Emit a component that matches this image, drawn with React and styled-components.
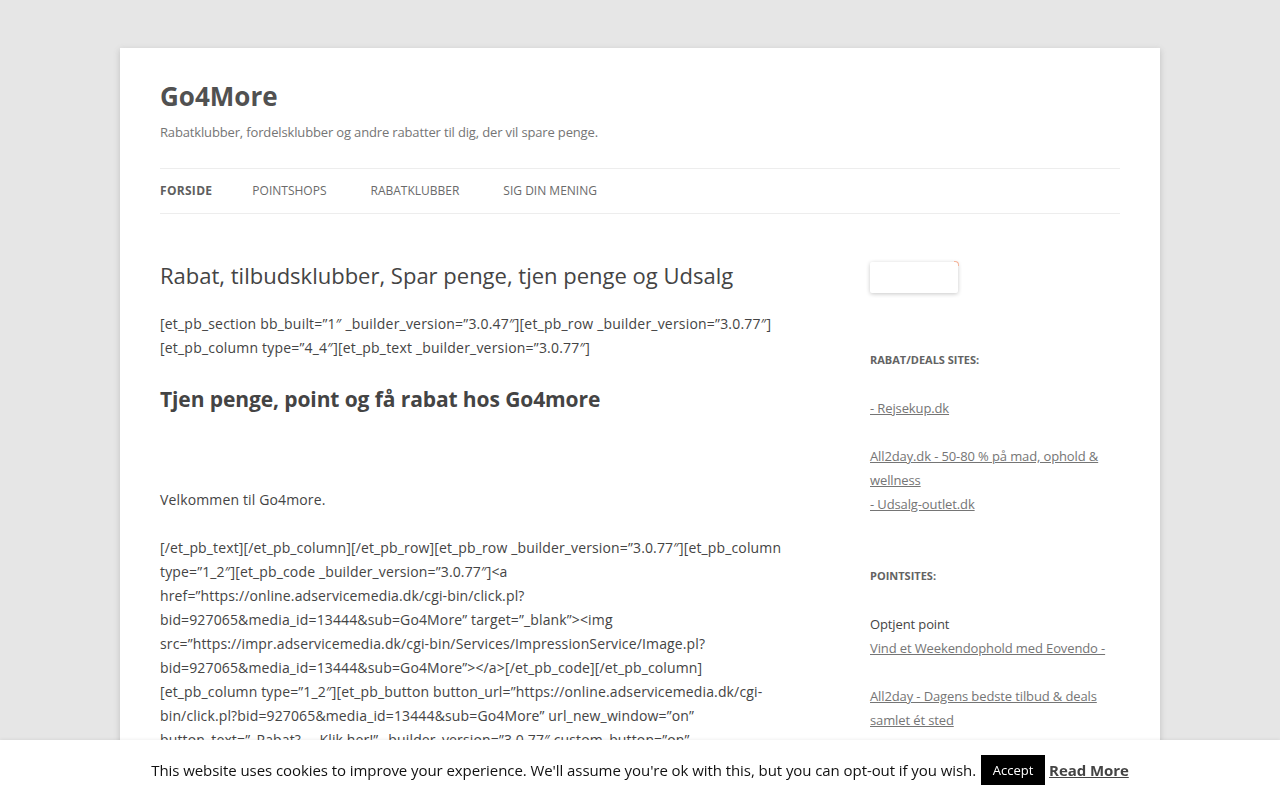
import React from "react";
import styled, { createGlobalStyle } from "styled-components";

const Global = createGlobalStyle`
  html, body { margin: 0; padding: 0; }
  body {
    background: #e6e6e6;
    font-family: "Open Sans", "Liberation Sans", sans-serif;
    color: #444;
    font-size: 14px;
    line-height: 24px;
  }
`;

const Page = styled.div`
  max-width: 960px;
  margin: 48px auto;
  padding: 0 40px 120px;
  background: #fff;
  box-shadow: 0 2px 6px rgba(100, 100, 100, 0.3);
  overflow: hidden;
`;

const Header = styled.header`
  padding: 24px 0 0;
`;

const SiteTitle = styled.h1`
  margin: 0;
  font-size: 26px;
  line-height: 48px;
  font-weight: 700;
  color: #515151;
`;

const SiteDesc = styled.h2`
  margin: 0;
  font-size: 13px;
  line-height: 24px;
  font-weight: 400;
  letter-spacing: -0.15px;
  color: #757575;
`;

const Nav = styled.nav`
  margin-top: 24px;
  border-top: 1px solid #ededed;
  border-bottom: 1px solid #ededed;
  display: flex;
  gap: 44px;
`;

const NavItem = styled.a`
  font-size: 12px;
  line-height: 44px;
  text-transform: uppercase;
  text-decoration: none;
  color: ${(p) => (p.$active ? "#5e5e5e" : "#6a6a6a")};
  font-weight: ${(p) => (p.$active ? 700 : 400)};
  letter-spacing: ${(p) => (p.$active ? "0.3px" : "0")};
  margin-right: ${(p) => (p.$active ? "-4px" : "0")};
`;

const Main = styled.div`
  display: flex;
  justify-content: space-between;
  padding-top: 48px;
`;

const Content = styled.article`
  width: 625px;
`;

const EntryTitle = styled.h1`
  margin: 0 0 25px;
  padding-top: 1px;
  font-size: 22px;
  line-height: 24px;
  font-weight: 400;
  color: #444;
`;

const P = styled.p`
  margin: 0 0 24px;
  font-size: 14px;
  line-height: 24px;
  letter-spacing: ${(p) => p.$ls || "0.14px"};
  color: #444;
`;

const H1 = styled.h2`
  margin: 0 0 24px;
  font-size: 21px;
  line-height: 31.5px;
  font-weight: 700;
  letter-spacing: -0.1px;
  color: #444;
`;

const Sidebar = styled.aside`
  width: 250px;
`;

const Widget = styled.section`
  margin-bottom: ${(p) => p.$mb || 48}px;
`;

const BadgeBox = styled.div`
  position: relative;
  width: 88px;
  height: 31px;
  background: #fff;
  border-radius: 2px;
  box-shadow: 0 1px 4px rgba(0, 0, 0, 0.22);
  &::after {
    content: "";
    position: absolute;
    right: -1px;
    top: -1px;
    width: 4px;
    height: 4px;
    border-top-right-radius: 4px;
    border-top: 1px solid #f5b49a;
    border-right: 1px solid #f5b49a;
  }
`;

const WidgetTitle = styled.h3`
  margin: 0 0 24px;
  font-size: 11px;
  line-height: 24px;
  font-weight: 700;
  text-transform: uppercase;
  color: #636363;
`;

const WidgetText = styled.div`
  font-size: 13px;
  line-height: 24px;
  letter-spacing: -0.12px;
  color: #444;
`;

const WLink = styled.a`
  color: #757575;
  text-decoration: underline;
`;

const CookieBar = styled.div`
  position: fixed;
  left: 0;
  right: 0;
  bottom: 0;
  height: 60px;
  background: #fff;
  box-shadow: 0 -1px 3px rgba(0, 0, 0, 0.06);
  display: flex;
  align-items: center;
  justify-content: center;
  font-size: 15px;
  letter-spacing: -0.07px;
  color: #111;
`;

const AcceptBtn = styled.button`
  margin-left: 5px;
  background: #000;
  color: #fff;
  border: 0;
  font-family: "Open Sans", "Liberation Sans", sans-serif;
  font-size: 13px;
  height: 30px;
  width: 64px;
  padding: 0;
  cursor: pointer;
`;

const ReadMore = styled.a`
  margin-left: 4px;
  font-weight: 700;
  color: #444;
  text-decoration: underline;
`;

export default function App() {
  return (
    <>
      <Global />
      <Page>
        <Header>
          <SiteTitle>Go4More</SiteTitle>
          <SiteDesc>Rabatklubber, fordelsklubber og andre rabatter til dig, der vil spare penge.</SiteDesc>
          <Nav>
            <NavItem $active>Forside</NavItem>
            <NavItem>Pointshops</NavItem>
            <NavItem>Rabatklubber</NavItem>
            <NavItem>Sig din mening</NavItem>
          </Nav>
        </Header>
        <Main>
          <Content>
            <EntryTitle>Rabat, tilbudsklubber, Spar penge, tjen penge og Udsalg</EntryTitle>
            <P $ls="0.2px">
              [et_pb_section bb_built=”1″ _builder_version=”3.0.47″][et_pb_row _builder_version=”3.0.77″][et_pb_column type=”4_4″][et_pb_text _builder_version=”3.0.77″]
            </P>
            <H1>Tjen penge, point og få rabat hos Go4more</H1>
            <P>&nbsp;</P>
            <P>Velkommen til Go4more.</P>
            <P>
              [/et_pb_text][/et_pb_column][/et_pb_row][et_pb_row _builder_version=”3.0.77″][et_pb_column type=”1_2″][et_pb_code _builder_version=”3.0.77″]&lt;a href=”https://online.adservicemedia.dk/cgi-bin/click.pl?bid=927065&amp;media_id=13444&amp;sub=Go4More” target=”_blank”&gt;&lt;img src=”https://impr.adservicemedia.dk/cgi-bin/Services/ImpressionService/Image.pl?bid=927065&amp;media_id=13444&amp;sub=Go4More”&gt;&lt;/a&gt;[/et_pb_code][/et_pb_column][et_pb_column type=”1_2″][et_pb_button button_url=”https://online.adservicemedia.dk/cgi-bin/click.pl?bid=927065&amp;media_id=13444&amp;sub=Go4More” url_new_window=”on” button_text=”_Rabat?_ - Klik her!” _builder_version=”3.0.77″ custom_button=”on” button_alignment=”center”][/et_pb_button][/et_pb_column][/et_pb_row][/et_pb_section]
            </P>
          </Content>
          <Sidebar>
            <Widget $mb={55}>
              <BadgeBox />
            </Widget>
            <Widget>
              <WidgetTitle>Rabat/Deals sites:</WidgetTitle>
              <WidgetText>
                <WLink>- Rejsekup.dk</WLink>
                <br />
                <br />
                <WLink>All2day.dk - 50-80 % på mad, ophold &amp; wellness</WLink>
                <br />
                <WLink>- Udsalg-outlet.dk</WLink>
              </WidgetText>
            </Widget>
            <Widget>
              <WidgetTitle>Pointsites:</WidgetTitle>
              <WidgetText>
                Optjent point
                <br />
                <WLink>Vind et Weekendophold med Eovendo -</WLink>
                <br />
                <br />
                <WLink>All2day - Dagens bedste tilbud &amp; deals samlet ét sted</WLink>
              </WidgetText>
            </Widget>
          </Sidebar>
        </Main>
      </Page>
      <CookieBar>
        <span>This website uses cookies to improve your experience. We'll assume you're ok with this, but you can opt-out if you wish.</span>
        <AcceptBtn>Accept</AcceptBtn>
        <ReadMore>Read More</ReadMore>
      </CookieBar>
    </>
  );
}
